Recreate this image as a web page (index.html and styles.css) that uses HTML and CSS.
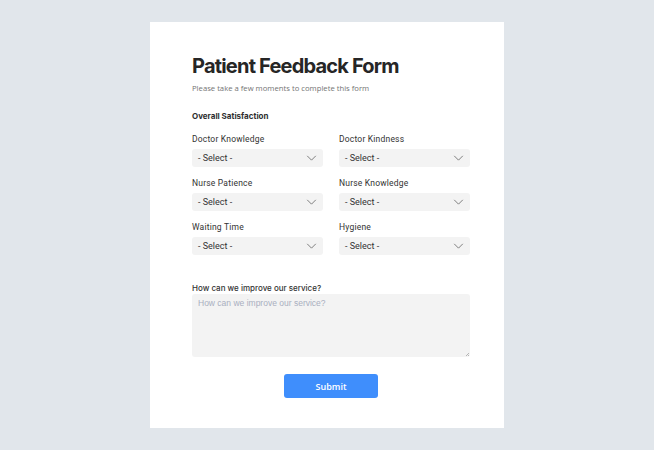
FILE: index.html
```html
<!DOCTYPE html>
<html lang="en">
<head>
    <meta charset="UTF-8">
    <meta name="viewport" content="width=device-width, initial-scale=1.0">
    <title>Patient Feedback Form</title>
    <link rel="stylesheet" href="styles.css">
</head>
<body>
    <form class="card">
        <h1 class="title">Patient Feedback Form</h1>
        <p class="subtitle">Please take a few moments to complete this form</p>
        <h2 class="section">Overall Satisfaction</h2>

        <div class="grid">
            <div class="field">
                <label>Doctor Knowledge</label>
                <div class="select">- Select -<svg viewBox="0 0 12 7"><path d="M1 1l5 5 5-5"/></svg></div>
            </div>
            <div class="field">
                <label>Doctor Kindness</label>
                <div class="select">- Select -<svg viewBox="0 0 12 7"><path d="M1 1l5 5 5-5"/></svg></div>
            </div>
            <div class="field">
                <label>Nurse Patience</label>
                <div class="select">- Select -<svg viewBox="0 0 12 7"><path d="M1 1l5 5 5-5"/></svg></div>
            </div>
            <div class="field">
                <label>Nurse Knowledge</label>
                <div class="select">- Select -<svg viewBox="0 0 12 7"><path d="M1 1l5 5 5-5"/></svg></div>
            </div>
            <div class="field">
                <label>Waiting Time</label>
                <div class="select">- Select -<svg viewBox="0 0 12 7"><path d="M1 1l5 5 5-5"/></svg></div>
            </div>
            <div class="field">
                <label>Hygiene</label>
                <div class="select">- Select -<svg viewBox="0 0 12 7"><path d="M1 1l5 5 5-5"/></svg></div>
            </div>
        </div>

        <label class="area-label">How can we improve our service?</label>
        <textarea class="area" placeholder="How can we improve our service?"></textarea>

        <div class="actions">
            <button type="button" class="submit">Submit</button>
        </div>
    </form>
</body>
</html>
```

FILE: styles.css
```css
body {
    margin: 0;
    background: #e1e6eb;
    font-family: Roboto, "Liberation Sans", sans-serif;
    color: #2b2b2b;
}
.card {
    display: flex;
    flex-direction: column;
    width: 354px;
    height: 406px;
    box-sizing: border-box;
    margin: 22px 0 0 150px;
    padding: 0 34px 0 42px;
    background: #fff;
}
.title {
    margin: 31px 0 0;
    font-family: Inter, sans-serif;
    font-size: 20px;
    font-weight: 700;
    letter-spacing: -0.8px;
    line-height: 26px;
    color: #262626;
}
.subtitle {
    margin: 4px 0 0;
    font-family: "Open Sans", sans-serif;
    font-size: 7.7px;
    line-height: 11px;
    color: #747474;
}
.section {
    margin: 17px 0 0;
    font-family: Inter, sans-serif;
    font-size: 8px;
    font-weight: 700;
    color: #2e2e2e;
}
.grid {
    display: grid;
    grid-template-columns: 131px 131px;
    column-gap: 16px;
    row-gap: 11px;
    margin-top: 13px;
    width: 278px;
}
.field label,
.area-label {
    display: block;
    font-size: 8.5px;
    letter-spacing: 0.2px;
    color: #333;
    line-height: 10px;
    margin-bottom: 5px;
}
.select {
    display: flex;
    align-items: center;
    justify-content: space-between;
    height: 18px;
    padding: 0 6px;
    border-radius: 3px;
    background: #f3f3f3;
    font-size: 9px;
    color: #333;
}
.select svg {
    width: 11px;
    height: 6px;
    fill: none;
    stroke: #6c6c6c;
    stroke-width: 1;
}
.area-label {
    margin-top: 28px;
    font-family: Inter, sans-serif;
    font-size: 8px;
    letter-spacing: 0;
    font-weight: 500;
    margin-bottom: 1px;
}
.area {
    width: 278px;
    height: 63px;
    box-sizing: border-box;
    border: none;
    border-radius: 3px;
    background-color: #f3f3f3;
    background-image: linear-gradient(135deg, transparent 70%, #b5b5b5 70%, #b5b5b5 76%, transparent 76%, transparent 86%, #b5b5b5 86%, #b5b5b5 92%, transparent 92%);
    background-size: 6px 6px;
    background-position: right 1px bottom 1px;
    background-repeat: no-repeat;
    padding: 4px 6px;
    font-family: "Liberation Sans", sans-serif;
    font-size: 8.5px;
    resize: none;
}
.area::placeholder {
    color: #a9afbf;
}
.actions {
    display: flex;
    justify-content: center;
    width: 278px;
    margin-top: 17px;
}
.submit {
    width: 94px;
    height: 24px;
    border: none;
    border-radius: 3px;
    background: #3f8efc;
    color: #fff;
    font-family: "Open Sans", sans-serif;
    font-size: 9px;
    font-weight: 600;
}
```
